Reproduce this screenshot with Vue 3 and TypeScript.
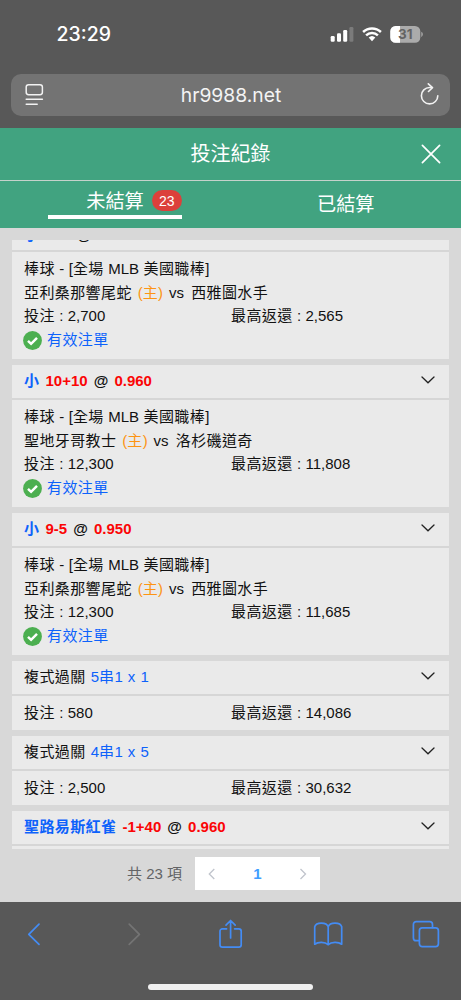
<script setup lang="ts">
interface Run { text: string; cjk: boolean }
interface Bet {
  pick?: string
  line?: string
  odds?: string
  parlay?: string
  home?: string
  away?: string
  stake: string
  payout: string
}

const LEAGUE = '棒球 - [全場 MLB 美國職棒]'

const bets: Bet[] = [
  { pick: '小', line: '9+5', odds: '0.950', home: '亞利桑那響尾蛇', away: '西雅圖水手', stake: '2,700', payout: '2,565' },
  { pick: '小', line: '10+10', odds: '0.960', home: '聖地牙哥教士', away: '洛杉磯道奇', stake: '12,300', payout: '11,808' },
  { pick: '小', line: '9-5', odds: '0.950', home: '亞利桑那響尾蛇', away: '西雅圖水手', stake: '12,300', payout: '11,685' },
  { parlay: '5串1 x 1', stake: '580', payout: '14,086' },
  { parlay: '4串1 x 5', stake: '2,500', payout: '30,632' },
  { pick: '聖路易斯紅雀', line: '-1+40', odds: '0.960', stake: '', payout: '' },
]

// Splits a string so that Chinese runs can carry their own tracking.
function runs(text: string): Run[] {
  return (text.match(/[\u4e00-\u9fff]+|[^\u4e00-\u9fff]+/g) ?? []).map((t) => ({
    text: t,
    cjk: /[\u4e00-\u9fff]/.test(t),
  }))
}
</script>

<template>
  <div class="phone">
    <header class="status">
      <span class="clock">23:29</span>
      <svg class="indicators" width="94" height="18" viewBox="0 0 94 18">
        <g fill="#fff">
          <rect x="0.7" y="10" width="4" height="5.7" rx="1.2" />
          <rect x="7" y="7.2" width="4" height="8.5" rx="1.2" />
          <rect x="13.2" y="4" width="4" height="11.7" rx="1.2" />
          <rect x="19.4" y="1" width="4" height="14.7" rx="1.2" fill="#7b7b7b" />
          <path d="M38.7 11.6a4.8 4.8 0 0 1 6.6 0L42 15.3z" />
        </g>
        <g fill="none" stroke="#fff" stroke-width="2.5">
          <path d="M33.1 6a13 13 0 0 1 17.8 0" />
          <path d="M36.1 9.3a8.6 8.6 0 0 1 11.8 0" />
        </g>
        <rect x="60.3" y="0" width="30" height="16.7" rx="5.3" fill="#ababab" />
        <path d="M70 0h-4.4a5.3 5.3 0 0 0-5.3 5.3v6.1a5.3 5.3 0 0 0 5.3 5.3H70z" fill="#fff" />
        <path d="M91.3 5.8c2 .8 2 4.3 0 5.1z" fill="#ababab" />
        <text x="75.2" y="13" class="level" text-anchor="middle">31</text>
      </svg>
    </header>

    <div class="address">
      <svg width="20" height="24" viewBox="0 0 20 24" fill="none" stroke="#f2f2f2" stroke-width="1.5" stroke-linecap="round">
        <rect x="1.2" y="1.7" width="16.2" height="10" rx="2.4" />
        <path d="M1.2 16.3h16.2M1.2 21.3h11" />
      </svg>
      <span class="url">hr9988.net</span>
      <svg width="20" height="24" viewBox="0 0 20 24" fill="none" stroke="#f2f2f2" stroke-width="1.6" stroke-linecap="round" stroke-linejoin="round">
        <path d="M12.4 4.5h-1.8a8.2 8.2 0 1 0 8.2 8.2" />
        <path d="M9.3 .8l4.2 3.8-4 3.9" />
      </svg>
    </div>

    <div class="title">
      <h1>投注紀錄</h1>
      <svg class="close" width="20" height="20" viewBox="0 0 20 20" stroke="#fff" stroke-width="1.7" stroke-linecap="round">
        <path d="M1.4 1.4l17.2 17.2M18.6 1.4L1.4 18.6" />
      </svg>
    </div>

    <nav class="tabs">
      <div class="tab">
        <div class="active">未結算<span class="badge">23</span></div>
      </div>
      <div class="tab settled">已結算</div>
    </nav>

    <main>
      <section class="list">
        <div class="scroll">
          <article v-for="(b, i) in bets" :key="i" class="card">
            <div class="head">
              <div v-if="b.parlay" class="heading parlay">
                <span class="cjk">複式過關</span>&nbsp;<span class="blue"><span v-for="(r, k) in runs(b.parlay)" :key="k" :class="{ cjk: r.cjk }">{{ r.text }}</span></span>
              </div>
              <div v-else class="heading strong">
                <span class="cjk blue">{{ b.pick }}</span>&nbsp;<span class="red">{{ b.line }}</span> @ <span class="red">{{ b.odds }}</span>
              </div>
              <svg width="14" height="8" viewBox="0 0 14 8" fill="none" stroke="#222" stroke-width="1.3" stroke-linecap="round">
                <path d="M1 1l6 5.8L13 1" />
              </svg>
            </div>
            <div class="body" :class="{ compact: b.parlay }">
              <template v-if="b.home">
                <p class="league"><span v-for="(r, k) in runs(LEAGUE)" :key="k" :class="{ cjk: r.cjk }">{{ r.text }}</span></p>
                <p class="match"><span class="cjk">{{ b.home }}</span> <span class="orange">(<span class="cjk">主</span>)</span> vs <span class="cjk away">{{ b.away }}</span></p>
              </template>
              <p v-if="b.stake" class="amounts">
                <span><span class="cjk">投注</span> : {{ b.stake }}</span>
                <span><span class="cjk">最高返還</span> : {{ b.payout }}</span>
              </p>
              <p v-if="b.home" class="valid blue">
                <svg width="19" height="19" viewBox="0 0 19 19">
                  <circle cx="9.5" cy="9.5" r="9.4" fill="#4caf50" />
                  <path d="M5 9.8l3.1 3L14 6.9" fill="none" stroke="#fff" stroke-width="2.5" />
                </svg>
                <span class="cjk">有效注單</span>
              </p>
            </div>
          </article>
        </div>
      </section>

      <footer class="pager">
        <span class="total">共 23 項</span>
        <div class="pages">
          <svg width="8" height="12" viewBox="0 0 8 12" fill="none" stroke="#c0c4cc" stroke-width="1.3"><path d="M6.3 1L1.3 6l5 5" /></svg>
          <b>1</b>
          <svg width="8" height="12" viewBox="0 0 8 12" fill="none" stroke="#c0c4cc" stroke-width="1.3"><path d="M1.5 1l5 5-5 5" /></svg>
        </div>
      </footer>
    </main>

    <div class="toolbar">
      <svg width="30" height="30" viewBox="0 0 30 30"><path d="M20 5.200L9.800 15.300 20 25.400" /></svg>
      <svg width="30" height="30" viewBox="0 0 30 30" class="off"><path d="M12.200 5.200l10.200 10.100L12.200 25.400" /></svg>
      <svg width="30" height="30" viewBox="0 0 30 30">
        <path d="M11.6 9.8H7.4A2.4 2.4 0 0 0 5 12.2v13.6a2.4 2.4 0 0 0 2.4 2.4h16.4a2.4 2.4 0 0 0 2.4-2.4V12.2a2.4 2.4 0 0 0-2.4-2.4h-4.2M15.6 19V1.600M11 6.100l4.600-4.600 4.600 4.600" />
      </svg>
      <svg width="30" height="30" viewBox="0 0 30 30">
        <path d="M15.2 7.8C13.7 2.9 3 2.9 1.7 7.8v17.4c3.200-2.400 10.200-2.600 13.500.5 3.300-3.100 10.300-2.900 13.500-.5V7.8c-1.300-4.900-12-4.900-13.500 0zv17.900" />
      </svg>
      <svg width="30" height="30" viewBox="0 0 30 30">
        <path d="M8 21.7H5.200a2.800 2.800 0 0 1-2.800-2.800V5.400a2.800 2.800 0 0 1 2.800-2.800h13.500a2.800 2.800 0 0 1 2.800 2.800v3.100" />
        <rect x="8.400" y="8.900" width="19" height="18.700" rx="2.800" />
      </svg>
    </div>
    <div class="home"></div>
  </div>
</template>

<style>
html, body { background: #585858; }
</style>

<style scoped>
.phone {
  width: 461px;
  height: 1000px;
  overflow: hidden;
  display: flex;
  flex-direction: column;
  background: #585858;
  color: #111;
  font-family: "Liberation Sans", "Noto Sans CJK TC", sans-serif;
  font-size: 15px;
}
.status {
  height: 74px;
  flex: none;
  box-sizing: border-box;
  padding: 20px 38px 0 56.5px;
  display: flex;
  justify-content: space-between;
  color: #fff;
}
.clock { font: 500 19.5px/29px Inter, sans-serif; }
.indicators { margin-top: 6px; margin-right: -1px; }
.level { font: 700 13.5px Inter, sans-serif; fill: #636363; }
.address {
  height: 42px;
  flex: none;
  margin: 0 11px;
  padding: 0 11px 0 14px;
  box-sizing: border-box;
  border-radius: 10px;
  background: #737373;
  display: flex;
  align-items: center;
  justify-content: space-between;
}
.url { margin-right: 2px; font: 400 19.3px/43px Inter, sans-serif; color: #f4f4f4; }
.title {
  height: 52px;
  flex: none;
  margin-top: 12px;
  background: #41a380;
  border-bottom: 1px solid #c5d2cb;
  color: #fff;
  display: grid;
  grid-template-columns: 1fr auto 1fr;
  align-items: center;
}
h1 { grid-column: 2; margin: 0; font-size: 20px; font-weight: 400; line-height: 53px; }
.close { justify-self: end; margin-right: 20.5px; margin-top: -1px; }
.tabs {
  height: 47px;
  flex: none;
  background: #41a380;
  color: #fff;
  display: flex;
  font-size: 19.2px;
}
.tab { width: 50%; display: flex; justify-content: center; }
.active {
  width: 134px;
  height: 38px;
  box-sizing: border-box;
  border-bottom: 4px solid #fff;
  padding-left: 38px;
  display: flex;
  line-height: 41px;
  white-space: nowrap;
}
.badge {
  width: 30px;
  height: 21px;
  margin: 9px 0 0 8px;
  flex: none;
  border-radius: 11px;
  background: #dc403b;
  font-size: 14px;
  line-height: 22px;
  text-align: center;
}
.settled { line-height: 47px; }
main {
  height: 674px;
  flex: none;
  background: #d8d8d8;
  padding: 12px 12px 0;
  box-sizing: border-box;
}
.list { height: 609px; overflow: hidden; }
.scroll { margin-top: -23px; display: flex; flex-direction: column; gap: 6px; }
.card { background: #eaeaea; }
.head {
  height: 33px;
  padding: 0 14px 0 12px;
  display: flex;
  align-items: center;
  justify-content: space-between;
  border-bottom: 2px solid #d6d6d6;
}
.heading { margin-top: -1px; line-height: 32px; white-space: nowrap; }
.card:first-child .heading { margin-top: 2px; }
.strong { font-weight: 700; word-spacing: 1.9px; }
.parlay { word-spacing: 0.9px; }
.head svg { margin-top: -3px; }
.body { height: 107px; padding: 5px 12px 0; box-sizing: border-box; }
.compact { height: 34px; }
p { margin: 0; line-height: 23.7px; white-space: nowrap; }
.league { word-spacing: 0.3px; }
.match { word-spacing: 1.7px; }
.away { margin-left: 1.3px; }
.amounts { display: grid; grid-template-columns: 207px 1fr; word-spacing: 0.2px; }
.valid { display: flex; align-items: center; gap: 5px; }
.valid svg { margin-left: -1px; margin-top: 1px; }
.cjk { letter-spacing: 0.4px; }
.blue { color: #0d62fb; }
.red { color: #fb0505; }
.orange { color: #fd9413; }
.pager {
  margin-top: 8px;
  display: flex;
  align-items: center;
  padding-left: 115px;
  gap: 12px;
}
.total { width: 56px; margin-top: -2px; white-space: nowrap; color: #636466; }
.pages {
  width: 125px;
  height: 33px;
  box-sizing: border-box;
  padding: 0 13px;
  background: #fff;
  display: flex;
  align-items: center;
  justify-content: space-between;
}
.pages b { color: #409eff; }
.toolbar {
  height: 65px;
  flex: none;
  box-sizing: border-box;
  padding: 17px 20px 0 19px;
  display: flex;
  justify-content: space-between;
}
.toolbar svg {
  overflow: visible;
  fill: none;
  stroke: #448cf4;
  stroke-width: 1.7;
  stroke-linecap: round;
  stroke-linejoin: round;
}
.toolbar .off { stroke: #747474; }
.home {
  width: 165px;
  height: 6px;
  flex: none;
  margin: 17.4px auto 0;
  border-radius: 3px;
  background: #f0f0f0;
}
</style>
